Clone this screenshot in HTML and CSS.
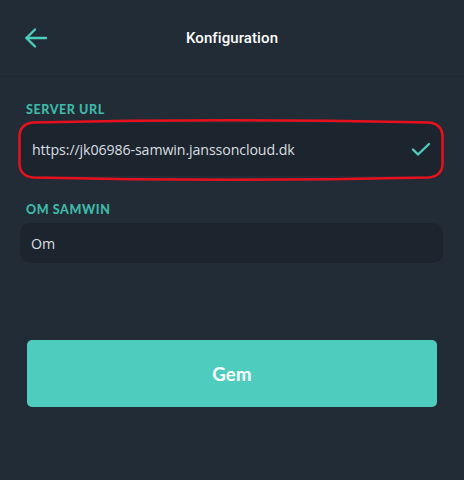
FILE: index.html
```html
<!DOCTYPE html>
<html>
<head>
<meta charset="utf-8">
<link rel="stylesheet" href="styles.css">
</head>
<body>
<div class="app">
  <header class="header">
    <div class="back">
      <svg width="24" height="24" viewBox="0 0 24 24" fill="none" stroke="#4ecdbf" stroke-width="2.4" stroke-linecap="round" stroke-linejoin="round">
        <path d="M22 12H2.5"/>
        <path d="M11 3.5L2.5 12L11 20.5"/>
      </svg>
    </div>
    <h1 class="title">Konfiguration</h1>
    <div></div>
  </header>
  <main class="content">
    <section class="field">
      <label class="label">SERVER URL</label>
      <div class="input-wrap">
        <div class="input">
          <span class="value">https://jk06986-samwin.janssoncloud.dk</span>
          <svg class="check" width="20" height="15" viewBox="0 0 20 15" fill="none" stroke="#4ecdbf" stroke-width="2.4" stroke-linecap="round" stroke-linejoin="round">
            <path d="M2 7.5L7 12.5L18 2"/>
          </svg>
        </div>
        <svg class="annot" width="428" height="62" viewBox="0 0 428 62" fill="none" stroke="#e8101c" stroke-width="2.5">
          <path d="M16 3.5 Q214 -1 412 3.5 Q425 5 425.5 17 L425.5 45 Q425 57 412 58.5 Q214 63 16 58.5 Q3 57 2.5 45 L2.5 17 Q3 5 16 3.5 Z"/>
        </svg>
      </div>
    </section>
    <section class="field field2">
      <label class="label">OM SAMWIN</label>
      <div class="input input-om">
        <span class="value">Om</span>
      </div>
    </section>
    <button class="save">Gem</button>
  </main>
</div>
</body>
</html>
```

FILE: styles.css
```css
* { box-sizing: border-box; }
html, body {
  margin: 0;
  padding: 0;
  background: #212c36;
  width: 464px;
  height: 480px;
  overflow: hidden;
}
.app {
  font-family: "Lato", "Open Sans", sans-serif;
  color: #e6eaec;
}
.header {
  height: 77px;
  display: grid;
  grid-template-columns: 80px 1fr 80px;
  align-items: center;
  border-bottom: 1px solid #1e2831;
  padding-bottom: 0;
}
.back {
  padding-left: 24px;
  display: flex;
  align-items: center;
  height: 24px;
}
.title {
  margin: 0;
  text-align: center;
  font-family: "Roboto", sans-serif;
  font-weight: 500;
  font-size: 15px;
  color: #ffffff;
  letter-spacing: 0.1px;
}
.content {
  padding: 0 21px 0 20px;
}
.field {
  display: flex;
  flex-direction: column;
}
.label {
  font-family: "Lato", sans-serif;
  font-weight: 900;
  font-size: 12.5px;
  color: #3fb9a9;
  letter-spacing: 0.6px;
  padding-left: 6px;
  margin-top: 25px;
  height: 21px;
  line-height: 16px;
}
.input-wrap {
  position: relative;
}
.input {
  background: #1c252d;
  border-radius: 10px;
  height: 53px;
  display: flex;
  align-items: center;
  justify-content: space-between;
  padding: 0 12px 0 12px;
}
.value {
  font-family: "Open Sans", sans-serif;
  font-size: 14.2px;
  color: #d9dee1;
  letter-spacing: -0.1px;
}
.annot {
  position: absolute;
  left: -3px;
  top: -4px;
}
.field2 .label {
  margin-top: 26px;
  height: 21px;
}
.input-om {
  height: 40px;
  padding-left: 11px;
}
.save {
  display: block;
  margin: 77px 6px 0 7px;
  width: calc(100% - 13px);
  height: 67px;
  background: #4ecdbf;
  border: none;
  border-radius: 5px;
  color: #ffffff;
  font-family: "Lato", sans-serif;
  font-weight: 700;
  font-size: 18.5px;
  letter-spacing: 0.2px;
}
```
